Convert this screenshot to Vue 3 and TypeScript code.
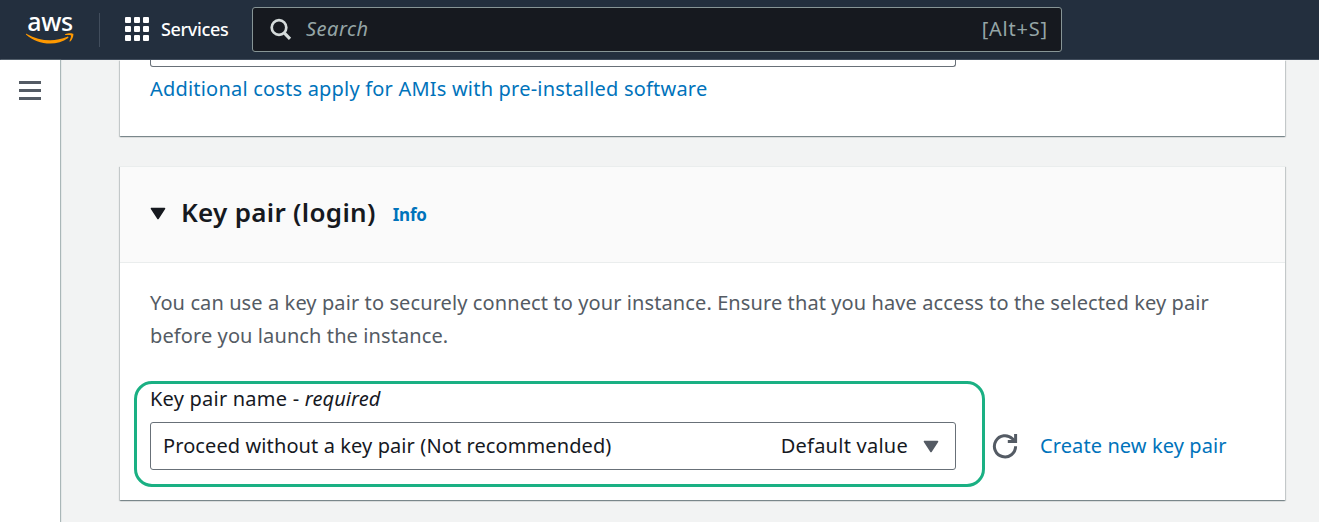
<script setup lang="ts">
const gridCells: number[] = [0, 1, 2, 3, 4, 5, 6, 7, 8]
</script>

<template>
  <div class="page">
    <header class="topbar">
      <a class="logo">
        <span class="logo-text">aws</span>
        <svg class="smile" width="50" height="13" viewBox="0 0 50 13">
          <path d="M1.200 1.700C.5 1.200 1 .5 1.800.9 9 5 17 7.200 25.300 7.200 31 7.200 36.800 6 42.300 3.700c1-.4 1.600.6.8 1.200C38 8.500 31.500 10.600 25.200 10.600 16 10.600 7.700 7.200 1.200 1.700Z" fill="#ff9900" />
          <path d="M40.200 1.200C42.800-.2 47.500-.1 48.200.8 48.800 1.700 47.900 6.200 45.200 8.400c-.4.4-.9.2-.7-.4.7-1.700 2-4.800 1.400-5.500-.6-.8-3.700-.6-5.400-.4-.6 0-.8-.5-.3-.9Z" fill="#ff9900" />
        </svg>
      </a>
      <span class="divider"></span>
      <button class="services">
        <span class="grid"><i v-for="cell in gridCells" :key="cell"></i></span>
        <span class="services-label">Services</span>
      </button>
      <div class="search">
        <svg width="24" height="24" viewBox="0 0 24 24" fill="none" stroke="#d5dbdb">
          <circle cx="10" cy="9.500" r="7.300" stroke-width="2.700" />
          <path d="M15 14.700L21 20.900" stroke-width="3.200" />
        </svg>
        <span class="placeholder">Search</span>
        <span class="shortcut">[Alt+S]</span>
      </div>
    </header>

    <div class="body">
      <nav class="rail">
        <span class="menu"><i></i><i></i><i></i></span>
      </nav>
      <main class="content">
        <section class="card ami">
          <div class="ami-select"></div>
          <a class="link costs">Additional costs apply for AMIs with pre-installed software</a>
        </section>

        <section class="card keypair">
          <div class="card-head">
            <svg class="caret" width="16" height="13" viewBox="0 0 16 13">
              <path d="M1.500 1.500h13L8 11.500Z" fill="#16191f" stroke="#16191f" stroke-width="1.600" stroke-linejoin="round" />
            </svg>
            <h2>Key pair (login)</h2>
            <a class="info">Info</a>
          </div>
          <div class="card-body">
            <p>You can use a key pair to securely connect to your instance. Ensure that you have access to the selected key pair<br>before you launch the instance.</p>
            <div class="field">
              <div class="highlight"></div>
              <label><span class="name">Key pair name - </span><em>required</em></label>
              <div class="row">
                <div class="select">
                  <span class="value">Proceed without a key pair (Not recommended)</span>
                  <span class="tag">Default value</span>
                  <svg width="16" height="13" viewBox="0 0 16 13">
                    <path d="M1.500 1.500h13L8 11.500Z" fill="#545b64" stroke="#545b64" stroke-width="1.600" stroke-linejoin="round" />
                  </svg>
                </div>
                <svg class="refresh" width="26" height="26" viewBox="0 0 26 26" fill="none" stroke="#545b64" stroke-width="3">
                  <path d="M23.600 13.300A10.600 10.600 0 1 1 20.500 5.800L22.500 7.800" />
                  <path d="M23.600 1V8.400H15.800" />
                </svg>
                <a class="link create">Create new key pair</a>
              </div>
            </div>
          </div>
        </section>
      </main>
    </div>
  </div>
</template>

<style>
body { margin: 0; overflow: hidden; }
</style>

<style scoped>
.page {
  width: 100%;
  height: 522px;
  overflow: hidden;
  background: #f2f3f3;
  color: #16191f;
  font: 20px/33px "Noto Sans", sans-serif;
  letter-spacing: 0.1px;
}
.topbar {
  box-sizing: border-box;
  height: 60px;
  display: flex;
  align-items: center;
  background: #232f3e;
  border-bottom: 1px solid #414d5c;
}
.logo {
  width: 50px;
  height: 32px;
  margin-left: 25px;
  display: flex;
  flex-direction: column;
  align-items: center;
}
.logo-text {
  height: 19px;
  line-height: 14px;
  font-size: 25px;
  font-weight: 500;
  letter-spacing: -0.3px;
  color: #fff;
}
.smile { flex: none; }
.divider { width: 1px; height: 34px; margin-left: 24px; background: #414d5c; }
.services {
  display: flex;
  align-items: center;
  gap: 12px;
  width: 103px;
  margin: -1px 0 0 25px;
  padding: 0;
  border: 0;
  background: none;
  color: #fff;
  font: 500 18px/24px "Noto Sans", sans-serif;
}
.services-label { margin-top: -1px; letter-spacing: -0.35px; }
.grid { display: grid; grid-template-columns: repeat(3, 6px); gap: 3px; }
.grid i { width: 6px; height: 6px; border-radius: 1px; background: #fff; }
.search {
  box-sizing: border-box;
  width: 810px;
  height: 45px;
  margin-left: 24px;
  padding: 0 14px 0 16px;
  display: flex;
  align-items: center;
  border: 1px solid #879596;
  border-radius: 3px;
  background: #16191f;
  color: #95a5a6;
}
.placeholder { margin: -2px 0 0 13px; font-style: italic; letter-spacing: 0.5px; }
.shortcut { margin: -2px -1px 0 auto; letter-spacing: 0.8px; }
.body { display: flex; height: 462px; }
.rail {
  width: 60px;
  flex: none;
  background: #fff;
  box-shadow: 1px 0 1px #aab7b8;
}
.menu { display: flex; flex-direction: column; gap: 5px; margin: 21px 0 0 19px; width: 22px; }
.menu i { height: 3px; background: #545b64; }
.content { width: 1165px; margin-left: 60px; }
.card {
  box-sizing: border-box;
  background: #fff;
  box-shadow: 0 1px 1px 0 rgba(0, 28, 36, 0.3), 1px 1px 1px 0 rgba(0, 28, 36, 0.15), -1px 1px 1px 0 rgba(0, 28, 36, 0.15);
}
.ami { height: 76px; padding-left: 30px; clip-path: inset(0 -4px -4px -4px); }
.ami-select {
  box-sizing: border-box;
  width: 806px;
  height: 7px;
  border: 1px solid #687078;
  border-top: 0;
  border-radius: 0 0 3px 3px;
}
.link { color: #0073bb; }
.costs { display: block; margin-top: 5px; white-space: nowrap; letter-spacing: 0.2px; }
.keypair { height: 334px; margin-top: 30px; }
.card-head {
  box-sizing: border-box;
  height: 97px;
  padding: 0 30px;
  display: flex;
  align-items: center;
  background: #fafafa;
  border-top: 1px solid #eaeded;
  border-bottom: 1px solid #eaeded;
}
.caret { margin-top: -3px; }
h2 { margin: -4px 0 0 15px; font-size: 26px; font-weight: 600; white-space: nowrap; letter-spacing: 0.3px; }
.info { margin: -1px 0 0 17px; font-size: 17px; font-weight: 700; color: #0073bb; letter-spacing: -0.2px; }
.card-body { padding: 23px 30px 0; }
p { margin: 0; color: #545b64; white-space: nowrap; }
.field { position: relative; margin-top: 30px; }
.highlight {
  position: absolute;
  left: -16px;
  top: -1px;
  width: 845px;
  height: 100px;
  border: 3px solid #1ab083;
  border-radius: 18px;
}
label { display: flex; white-space: pre; }
.name { letter-spacing: 0.22px; }
.row { display: flex; align-items: center; margin-top: 7px; white-space: nowrap; }
.select {
  box-sizing: border-box;
  width: 806px;
  height: 48px;
  padding: 0 16px 0 12px;
  display: flex;
  align-items: center;
  border: 1px solid #687078;
  border-radius: 3px;
}
.value, .tag, .create { margin-top: -1px; }
.tag { margin-left: auto; margin-right: 15px; letter-spacing: 0.25px; }
.refresh { margin-left: 36px; }
.create { margin-left: 22px; }
</style>
